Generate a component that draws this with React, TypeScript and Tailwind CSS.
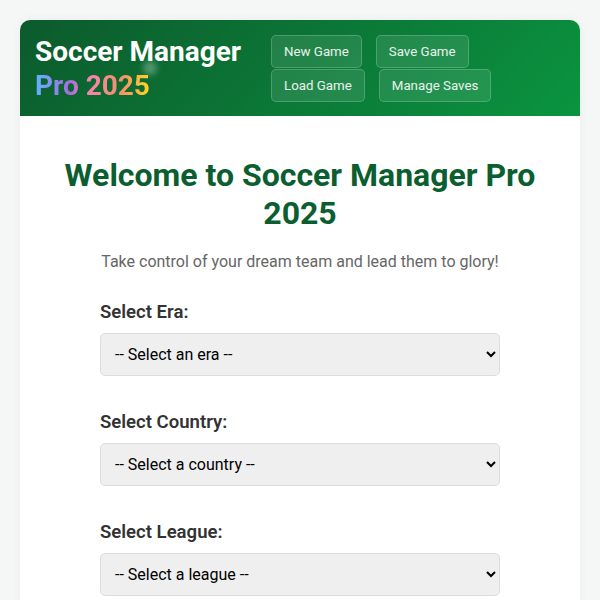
const menuItems = ["New Game", "Save Game", "Load Game", "Manage Saves"];

const fields = [
  { label: "Select Era:", placeholder: "-- Select an era --" },
  { label: "Select Country:", placeholder: "-- Select a country --" },
  { label: "Select League:", placeholder: "-- Select a league --" },
];

function Field({ label, placeholder }: { label: string; placeholder: string }) {
  return (
    <div className="mb-[33px] w-[400px]">
      <label className="mb-[8px] block text-[18.56px] leading-[26px] font-semibold text-[#333333]">{label}</label>
      <select className="h-[43px] w-full rounded-[5px] border border-[#dddddd] bg-[#efefef] px-[10px] text-[16px] text-black">
        <option>{placeholder}</option>
      </select>
    </div>
  );
}

export default function App() {
  return (
    <div className="h-[600px] overflow-hidden bg-[#f5f7f6] px-5 pt-5 font-['Roboto',sans-serif]">
      <div className="rounded-t-[10px] bg-white shadow-[0_0_12px_rgba(0,0,0,0.04)]">
        <header className="flex h-[96px] items-center rounded-t-[10px] bg-[linear-gradient(135deg,#0c5a2c,#0a9440)] px-[15px]">
          <div className="relative w-[236px] shrink-0">
            <h1 className="pt-[1px] text-[28px] leading-[34px] font-bold text-white">
              Soccer Manager
              <br />
              <span className="bg-[linear-gradient(90deg,#60b4ff,#a86be0_30%,#f583b4_45%,#f5916a_75%,#ffd51f)] bg-clip-text text-transparent">
                Pro 2025
              </span>
            </h1>
            <span className="absolute top-[27px] left-[108px] h-[14px] w-[14px] rounded-full bg-white/30 blur-[3px]" />
          </div>
          <nav className="flex w-[240px] flex-wrap gap-x-[14px] gap-y-[1px] pt-[1px]">
            {menuItems.map((item) => (
              <button
                key={item}
                className="h-[33px] rounded-[5px] border border-white/20 bg-white/10 px-3 pt-[1px] text-[13.3px] whitespace-nowrap text-white/90"
              >
                {item}
              </button>
            ))}
          </nav>
        </header>
        <main className="flex flex-col items-center px-10 pt-[40px]">
          <h2 className="text-center text-[32px] leading-[38px] font-bold text-[#0b5e2f]">
            Welcome to Soccer Manager Pro 2025
          </h2>
          <p className="mt-[17px] mb-[24px] text-[16px] leading-[26px] text-[#666666]">
            Take control of your dream team and lead them to glory!
          </p>
          {fields.map((field) => (
            <Field key={field.label} label={field.label} placeholder={field.placeholder} />
          ))}
        </main>
      </div>
    </div>
  );
}
